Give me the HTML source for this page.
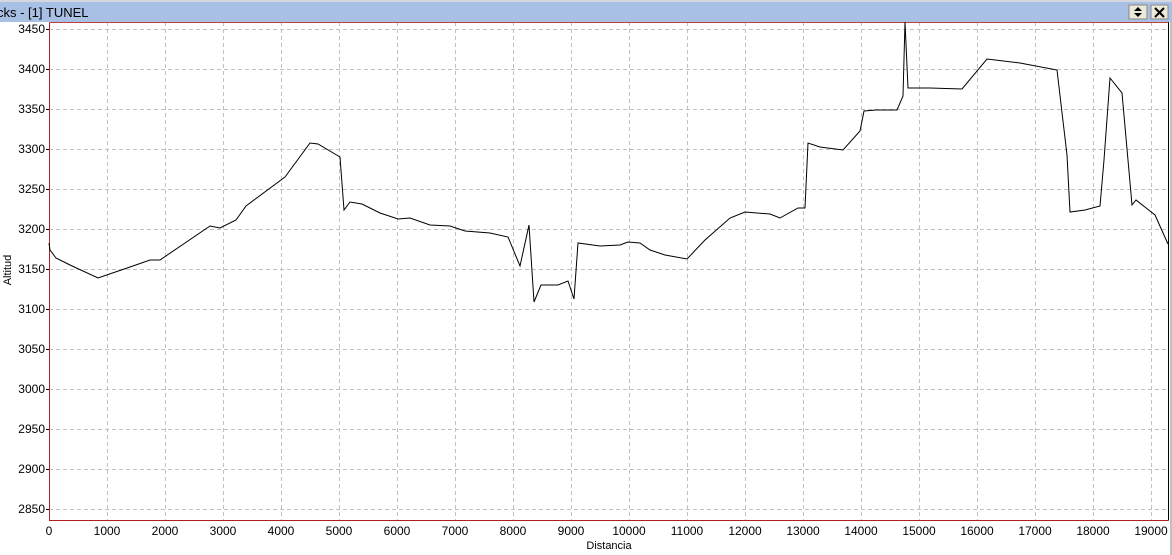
<!DOCTYPE html><html><head><style>body{margin:0;width:1172px;height:555px;overflow:hidden;background:#fff;font-family:"Liberation Sans",sans-serif}</style></head><body>
<svg width="1172" height="555" xmlns="http://www.w3.org/2000/svg" style="position:absolute;left:0;top:0">
<rect x="0" y="0" width="1172" height="22" fill="#a8c0e4"/>
<rect x="0" y="0" width="1172" height="2" fill="#d4d8de"/>
<text x="-3" y="17" font-size="13" fill="#000" font-family="Liberation Sans">cks - [1] TUNEL</text>
<rect x="1129" y="5" width="18" height="14" fill="#ece9d8" stroke="#888"/>
<path d="M1138 7l-4 4h8z M1138 17l-4-4h8z" fill="#000"/>
<rect x="1151" y="5" width="17" height="14" fill="#ece9d8" stroke="#888"/>
<path d="M1155 8l9 9M1164 8l-9 9" stroke="#000" stroke-width="2"/>
<rect x="1170" y="22" width="2" height="533" fill="#c0c0c0"/>
<g stroke="#c0c0c0" stroke-dasharray="4,3" stroke-width="1">
<line x1="49" x2="1168" y1="29.5" y2="29.5"/><line x1="49" x2="1168" y1="69.5" y2="69.5"/><line x1="49" x2="1168" y1="109.5" y2="109.5"/><line x1="49" x2="1168" y1="149.5" y2="149.5"/><line x1="49" x2="1168" y1="189.5" y2="189.5"/><line x1="49" x2="1168" y1="229.5" y2="229.5"/><line x1="49" x2="1168" y1="269.5" y2="269.5"/><line x1="49" x2="1168" y1="309.5" y2="309.5"/><line x1="49" x2="1168" y1="349.5" y2="349.5"/><line x1="49" x2="1168" y1="389.5" y2="389.5"/><line x1="49" x2="1168" y1="429.5" y2="429.5"/><line x1="49" x2="1168" y1="469.5" y2="469.5"/><line x1="49" x2="1168" y1="509.5" y2="509.5"/>
<line y1="22" y2="520" x1="107.5" x2="107.5"/><line y1="22" y2="520" x1="165.5" x2="165.5"/><line y1="22" y2="520" x1="223.5" x2="223.5"/><line y1="22" y2="520" x1="281.5" x2="281.5"/><line y1="22" y2="520" x1="339.5" x2="339.5"/><line y1="22" y2="520" x1="397.5" x2="397.5"/><line y1="22" y2="520" x1="455.5" x2="455.5"/><line y1="22" y2="520" x1="513.5" x2="513.5"/><line y1="22" y2="520" x1="571.5" x2="571.5"/><line y1="22" y2="520" x1="629.5" x2="629.5"/><line y1="22" y2="520" x1="687.5" x2="687.5"/><line y1="22" y2="520" x1="745.5" x2="745.5"/><line y1="22" y2="520" x1="803.5" x2="803.5"/><line y1="22" y2="520" x1="861.5" x2="861.5"/><line y1="22" y2="520" x1="919.5" x2="919.5"/><line y1="22" y2="520" x1="977.5" x2="977.5"/><line y1="22" y2="520" x1="1035.5" x2="1035.5"/><line y1="22" y2="520" x1="1093.5" x2="1093.5"/><line y1="22" y2="520" x1="1151.5" x2="1151.5"/>
</g>
<path d="M49.5 22.5H1168.5V520.5" fill="none" stroke="#000"/>
<path d="M49.5 22.5V520.5H1168.5" fill="none" stroke="#b02020"/>
<line x1="49.5" x2="1168" y1="22.5" y2="22.5" stroke="#c04040"/>
<polyline fill="none" stroke="#000" stroke-width="1" points="49,243 50,250 56,258 70,265 98,278 130,267 150,260 160,260 210,226 220,228 236,220 246,206 285,177 310,143 318,144 340,157 344,210 350,202 362,204 380,213 398,219 410,218 430,225 450,226 465,231 490,233 508,237 520,266 529,225 534,302 541,285 558,285 568,281 574,299 578,243 600,246 620,245 628,242 640,243 650,250 665,255 687,259 705,240 730,218 745,212 770,214 780,218 798,208 805,208 808,143 820,147 843,150 860,131 864,111 876,110 897,110 903,96 905,22 908,88 930,88 962,89 987,59 1020,63 1057,70 1067,155 1070,212 1085,210 1100,206 1104,160 1110,78 1122,93 1132,205 1136,200 1155,215 1168,244"/>
<g font-size="12" fill="#000" text-anchor="end">
<text x="45" y="33">3450</text><text x="45" y="73">3400</text><text x="45" y="113">3350</text><text x="45" y="153">3300</text><text x="45" y="193">3250</text><text x="45" y="233">3200</text><text x="45" y="273">3150</text><text x="45" y="313">3100</text><text x="45" y="353">3050</text><text x="45" y="393">3000</text><text x="45" y="433">2950</text><text x="45" y="473">2900</text><text x="45" y="513">2850</text>
</g>
<g stroke="#000"><line x1="46" x2="49" y1="29.5" y2="29.5"/><line x1="46" x2="49" y1="69.5" y2="69.5"/><line x1="46" x2="49" y1="109.5" y2="109.5"/><line x1="46" x2="49" y1="149.5" y2="149.5"/><line x1="46" x2="49" y1="189.5" y2="189.5"/><line x1="46" x2="49" y1="229.5" y2="229.5"/><line x1="46" x2="49" y1="269.5" y2="269.5"/><line x1="46" x2="49" y1="309.5" y2="309.5"/><line x1="46" x2="49" y1="349.5" y2="349.5"/><line x1="46" x2="49" y1="389.5" y2="389.5"/><line x1="46" x2="49" y1="429.5" y2="429.5"/><line x1="46" x2="49" y1="469.5" y2="469.5"/><line x1="46" x2="49" y1="509.5" y2="509.5"/></g>
<g font-size="12" fill="#000" text-anchor="middle">
<text x="49" y="535">0</text><text x="107" y="535">1000</text><text x="165" y="535">2000</text><text x="223" y="535">3000</text><text x="281" y="535">4000</text><text x="339" y="535">5000</text><text x="397" y="535">6000</text><text x="455" y="535">7000</text><text x="513" y="535">8000</text><text x="571" y="535">9000</text><text x="629" y="535">10000</text><text x="687" y="535">11000</text><text x="745" y="535">12000</text><text x="803" y="535">13000</text><text x="861" y="535">14000</text><text x="919" y="535">15000</text><text x="977" y="535">16000</text><text x="1035" y="535">17000</text><text x="1093" y="535">18000</text><text x="1151" y="535">19000</text>
<text x="609" y="549" font-size="11">Distancia</text>
<text x="0" y="0" font-size="11" transform="translate(11,270) rotate(-90)">Altitud</text>
</g>
</svg>
</body></html>
